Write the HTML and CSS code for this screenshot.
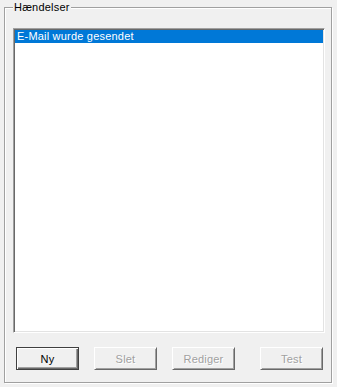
FILE: index.html
```html
<!doctype html>
<html lang="da">

<head>
	<meta charset="UTF-8">
	<title>Hændelser</title>
	<link rel="stylesheet" href="styles.css">
</head>

<body>
	<div class="group">
		<span class="group-title">Hændelser</span>
		<ul class="listbox">
			<li class="selected">E-Mail wurde gesendet</li>
		</ul>
		<div class="buttons">
			<button class="btn default">Ny</button>
			<button class="btn" disabled>Slet</button>
			<button class="btn" disabled>Rediger</button>
			<button class="btn btn-test" disabled>Test</button>
		</div>
	</div>
</body>

</html>
```

FILE: styles.css
```css
* {
	padding: 0;
	margin: 0;
	box-sizing: border-box;
}

body {
	background: #f0f0f0;
	font-family: 'Liberation Sans', Arial, sans-serif;
	font-size: 11px;
	letter-spacing: 0.2px;
	color: #000;
	width: 337px;
	height: 387px;
	overflow: hidden;
}

.group {
	position: relative;
	width: 328px;
	height: 376px;
	margin: 7px 0 0 4px;
	padding: 20px 0 0 8px;
	border: 1px solid #a0a0a0;
	box-shadow: 1px 1px 0 #fff, inset 1px 1px 0 #fff;
}

.group-title {
	position: absolute;
	top: -7px;
	left: 8px;
	padding: 0 1px;
	line-height: 13px;
	background: #f0f0f0;
}

.listbox {
	list-style: none;
	width: 312px;
	height: 305px;
	background: #fff;
	border: 1px solid;
	border-color: #a0a0a0 #fff #fff #a0a0a0;
	box-shadow: inset 1px 1px 0 #696969, inset -1px -1px 0 #e3e3e3;
	padding: 1px;
}

.listbox li {
	height: 13px;
	line-height: 13px;
	padding-left: 2px;
	white-space: nowrap;
}

.listbox li.selected {
	background: #0078d7;
	color: #fff;
}

.buttons {
	display: flex;
	margin-top: 14px;
	padding-left: 3px;
}

.btn {
	width: 63px;
	height: 23px;
	margin-right: 15px;
	font-family: inherit;
	font-size: 11px;
	letter-spacing: inherit;
	color: #000;
	background: #f0f0f0;
	border: 1px solid;
	border-color: #fff #696969 #696969 #fff;
	box-shadow: inset 1px 1px 0 #f0f0f0, inset -1px -1px 0 #a0a0a0;
	outline: none;
}

.btn.default {
	border: 1px solid #404040;
	box-shadow: inset 1px 1px 0 #fff, inset -1px -1px 0 #696969, inset -2px -2px 0 #a0a0a0;
}

.btn:disabled {
	color: #a0a0a0;
	text-shadow: 1px 1px 0 #fff;
}

.btn-test {
	margin-left: 10px;
	margin-right: 0;
}
```
